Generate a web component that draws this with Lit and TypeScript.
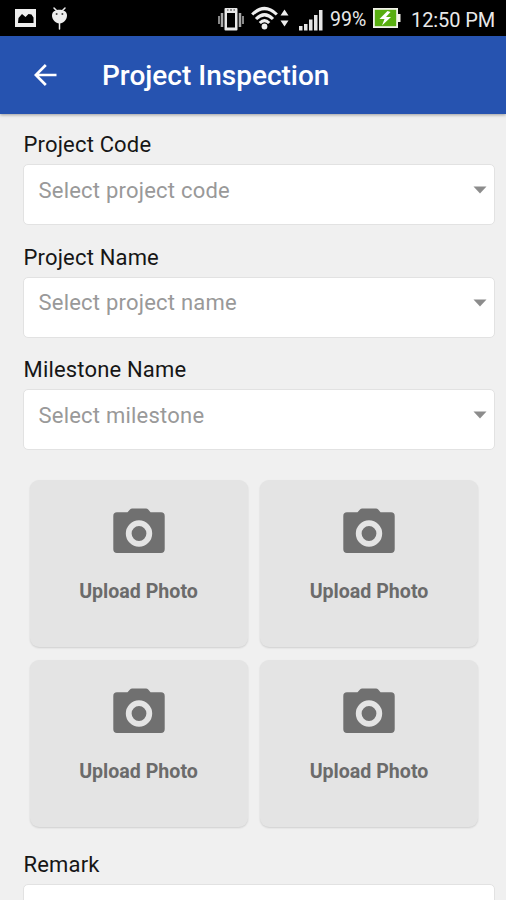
import { LitElement, html, css } from "lit";
import { customElement, property } from "lit/decorators.js";

@customElement("status-bar")
class StatusBar extends LitElement {
  static styles = css`
    :host {
      display: flex;
      align-items: center;
      height: 36px;
      background: #000;
      color: #e9e9e9;
      font: 400 20px/36px Roboto, sans-serif;
      white-space: nowrap;
    }
    svg { display: block; flex: none; }
    .picture { margin-left: 15px; }
    .droid { margin-left: 15px; }
    .vibrate { margin-left: auto; padding-top: 1px; }
    .wifi { margin-left: 6px; }
    .signal { margin-left: 10px; padding-top: 3px; }
    .percent { width: 37px; margin-left: 7px; font-size: 19.5px; padding-top: 3px; }
    .battery { margin-left: 6px; }
    .clock { width: 85px; margin-left: 10px; margin-right: 10px; padding-top: 3px; letter-spacing: -0.1px; }
  `;
  render() {
    return html`
      <svg class="picture" width="21" height="18" viewBox="0 0 21 18">
        <path fill="#eee" fill-rule="evenodd" d="M0 0h21v18H0z M3 14h15.500V8.500L16.500 5.500L13.500 5L10.500 8L7 5L3.500 9z" />
      </svg>
      <svg class="droid" width="17" height="24" viewBox="0 0 17 24">
        <path d="M3 2l3 3M14 2l-3 3M8.500 16v7" stroke="#eee" stroke-width="1.500" stroke-linecap="round" />
        <path fill="#eee" d="M1 9.500C1 6 4 3.800 8.500 3.800S16 6 16 9.500c0 4-3.500 8-7.500 8S1 13.500 1 9.500z" />
        <circle cx="5.600" cy="8" r="1" fill="#444" /><circle cx="11.400" cy="8" r="1" fill="#444" />
      </svg>
      <svg class="vibrate" width="28" height="24" viewBox="0 0 28 24">
        <path fill="#e8e8e8" fill-rule="evenodd" d="M8.500 1h11q1 0 1 1v20.500q0 1-1 1h-11q-1 0-1-1V2q0-1 1-1z M10 6v14.500h8V6z" />
        <path d="M10 3h1.500M13 3h2M16.500 3H18" stroke="#333" />
        <path d="M5 6v14M23 6v14" stroke="#aaa" stroke-width="2.500" />
        <path d="M2 9v8M26 9v8" stroke="#888" stroke-width="2" />
      </svg>
      <svg class="wifi" width="38" height="24" viewBox="0 0 38 24">
        <g fill="none" stroke="#eee" stroke-width="3.100">
          <path d="M1.200 8.500Q13.500-3.500 25.800 8.500" />
          <path d="M5 13Q13.500 4.500 22 13" />
          <path d="M8.800 17Q13.500 12.300 18.200 17" />
        </g>
        <circle cx="13.500" cy="20.500" r="2.900" fill="#eee" />
        <path fill="#eee" d="M29.500 9.500l4-6 4 6zM29.500 14.500h8l-4 6z" />
      </svg>
      <svg class="signal" width="24" height="22" viewBox="0 0 24 22">
        <path fill="#e4e4e4" d="M0 17h3.500v4.500H0zM5 15h3.500v6.500H5zM10 10.500h3.500v11H10zM15 6h3.500v15.500H15zM20 1h3.500v20.500H20z" />
      </svg>
      <span class="percent">99%</span>
      <svg class="battery" width="28" height="20" viewBox="0 0 28 20">
        <path fill="#f2f2e9" d="M0 0h25v6h2.500v8H25v6H0z" />
        <path fill="#58ae10" d="M1.800 1.800h21.400v16.400H1.800z" />
        <path fill="#fff" d="M14.500 3L6.500 11h5L9 17.500l9-8.500h-5l4.500-5z" />
      </svg>
      <span class="clock">12:50 PM</span>
    `;
  }
}

@customElement("select-field")
class SelectField extends LitElement {
  @property() label = "";
  @property() placeholder = "";
  static styles = css`
    :host { display: block; height: 112.5px; }
    .label {
      height: 34px;
      padding-left: 0.5px;
      font: 400 22px/30px Roboto, sans-serif;
      letter-spacing: 0.17px;
      color: #161616;
      white-space: nowrap;
    }
    .box {
      box-sizing: border-box;
      display: flex;
      justify-content: space-between;
      height: 61px;
      padding: 9.5px 7px 0 14.5px;
      background: #fff;
      border: 1px solid #e2e2e2;
      border-radius: 5px;
      font: 400 22px/31px Roboto, sans-serif;
      letter-spacing: 0.22px;
      color: #999;
    }
    svg { display: block; margin-top: 11.5px; }
  `;
  render() {
    return html`
      <div class="label">${this.label}</div>
      <div class="box">
        <span>${this.placeholder}</span>
        ${this.placeholder
          ? html`<svg width="14" height="8" viewBox="0 0 14 8"><path d="M.5.5h13L7 7.500z" fill="#8c8c8c" /></svg>`
          : ""}
      </div>
    `;
  }
}

@customElement("photo-tile")
class PhotoTile extends LitElement {
  static styles = css`
    :host {
      box-sizing: border-box;
      display: flex;
      flex-direction: column;
      align-items: center;
      height: 167px;
      padding-top: 28px;
      background: #e4e4e4;
      border-radius: 9px;
      box-shadow: 0 1px 2px rgba(0, 0, 0, 0.14);
      color: #6b6b6b;
      font: 700 19.6px/26px Roboto, sans-serif;
      white-space: nowrap;
    }
    svg { display: block; margin-bottom: 26px; }
  `;
  render() {
    return html`
      <svg width="52" height="45" viewBox="0 0 52 45">
        <path
          fill="#707070"
          d="M4 4.300H14.500L17 1.500Q17.800.5 19.200.5H33Q34.300.5 35.200 1.500L37.500 4.300H48Q51.700 4.300 51.700 8V41.300Q51.700 45 48 45H4Q.3 45 .3 41.300V8Q.3 4.300 4 4.300z"
        />
        <circle cx="26" cy="25.500" r="10.300" fill="none" stroke="#e4e4e4" stroke-width="5.800" />
      </svg>
      <span>Upload Photo</span>
    `;
  }
}

@customElement("app-root")
class AppRoot extends LitElement {
  static styles = css`
    :host {
      display: flex;
      flex-direction: column;
      height: 900px;
      overflow: hidden;
      background: #f0f0f0;
    }
    .toolbar {
      flex: none;
      display: flex;
      align-items: center;
      height: 78px;
      background: #2653b0;
      box-shadow: 0 1px 3px rgba(0, 0, 0, 0.35);
      color: #fff;
      font: 500 28px/36px Roboto, sans-serif;
      white-space: nowrap;
    }
    .back { display: block; margin: 0 45px 0 34px; }
    .title { padding-top: 2px; }
    .form { padding: 16px 11px 0 23px; }
    .photos {
      display: grid;
      grid-template-columns: 218px 218px;
      gap: 13px 12.5px;
      margin: 12.5px 0 23px 6.5px;
    }
  `;
  render() {
    return html`
      <status-bar></status-bar>
      <div class="toolbar">
        <svg class="back" width="23" height="22" viewBox="0 0 23 22">
          <path d="M22.500 11H2M11.800 1L1.800 11l10 10" fill="none" stroke="#fff" stroke-width="2.700" />
        </svg>
        <span class="title">Project Inspection</span>
      </div>
      <div class="form">
        <select-field label="Project Code" placeholder="Select project code"></select-field>
        <select-field label="Project Name" placeholder="Select project name"></select-field>
        <select-field label="Milestone Name" placeholder="Select milestone"></select-field>
        <div class="photos">
          ${[1, 2, 3, 4].map(() => html`<photo-tile></photo-tile>`)}
        </div>
        <select-field label="Remark"></select-field>
      </div>
    `;
  }
}
